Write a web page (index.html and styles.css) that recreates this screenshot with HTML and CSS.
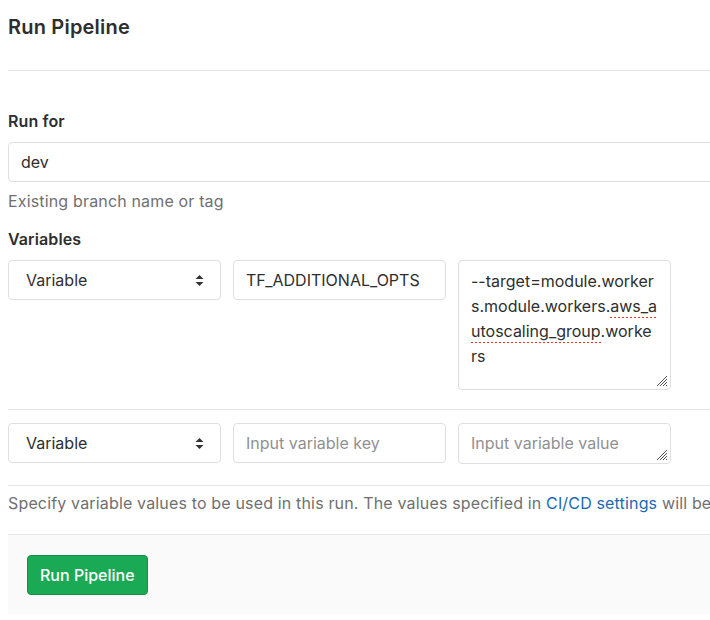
FILE: index.html
```html
<!DOCTYPE html>
<html lang="en">
<head>
<meta charset="utf-8">
<title>Run Pipeline</title>
<link rel="stylesheet" href="styles.css">
</head>
<body>
<div class="page">
  <div class="page-header">
    <h1 class="page-title">Run Pipeline</h1>
  </div>

  <form class="pipeline-form">
    <div class="form-group">
      <label class="label" for="ref">Run for</label>
      <input class="form-control" id="ref" type="text" value="dev">
      <div class="form-text">Existing branch name or tag</div>
    </div>

    <div class="form-group variables">
      <div class="label">Variables</div>
      <ul class="var-list">
        <li class="var-row">
          <div class="select">
            <span>Variable</span>
            <svg class="caret" width="9" height="13" viewBox="0 0 9 13"><path d="M4.5 1 L8.5 5 H0.5 Z M4.5 12 L8.5 8 H0.5 Z" fill="#333"/></svg>
          </div>
          <input class="form-control key" type="text" value="TF_ADDITIONAL_OPTS">
          <div class="textarea tall">--target=module.worker<br>s.module.workers.<span class="spell">aws_a</span><br><span class="spell">utoscaling_group</span>.worke<br>rs
            <svg class="grip" width="13" height="13" viewBox="0 0 13 13"><path d="M12 2 L2 12 M12 5 L5 12 M12 8 L8 12 M12 11 L11 12" stroke="#555" stroke-width="1"/></svg>
          </div>
        </li>
        <li class="var-row">
          <div class="select">
            <span>Variable</span>
            <svg class="caret" width="9" height="13" viewBox="0 0 9 13"><path d="M4.5 1 L8.5 5 H0.5 Z M4.5 12 L8.5 8 H0.5 Z" fill="#333"/></svg>
          </div>
          <input class="form-control key" type="text" placeholder="Input variable key">
          <div class="textarea short"><span class="placeholder">Input variable value</span>
            <svg class="grip" width="13" height="13" viewBox="0 0 13 13"><path d="M12 2 L2 12 M12 5 L5 12 M12 8 L8 12 M12 11 L11 12" stroke="#555" stroke-width="1"/></svg>
          </div>
        </li>
      </ul>
      <div class="form-text help">Specify variable values to be used in this run. The values specified in <a href="#">CI/CD settings</a> will be</div>
    </div>

    <div class="form-actions">
      <button type="button" class="btn-success">Run Pipeline</button>
    </div>
  </form>
</div>
</body>
</html>
```

FILE: styles.css
```css
html, body {
  margin: 0;
  padding: 0;
  overflow: hidden;
  background: #fff;
}

body {
  padding-left: 8px;
  font-family: Inter, "Noto Sans", sans-serif;
  font-size: 16px;
  color: #2e2e2e;
}

.page {
  width: 780px;
}

.page-header {
  padding: 15px 0 31px;
  border-bottom: 1px solid #e5e5e5;
}

.page-title {
  margin: 0;
  font-size: 20px;
  line-height: 24px;
  font-weight: 600;
  letter-spacing: 0.2px;
  color: #2e2e2e;
}

.pipeline-form {
  margin: 0;
}

.form-group {
  display: flex;
  flex-direction: column;
}

.form-group:first-child {
  padding-top: 40px;
}

.label {
  display: block;
  font-weight: 600;
  line-height: 20px;
  letter-spacing: 0.1px;
  margin-bottom: 11px;
}

.form-control {
  box-sizing: border-box;
  height: 40px;
  padding: 0 12px;
  border: 1px solid #dfdfdf;
  border-radius: 4px;
  font-family: inherit;
  font-size: 16px;
  color: #2e2e2e;
  background: #fff;
  outline: none;
}

.form-control::placeholder {
  color: #919191;
}

.form-text {
  margin-top: 9px;
  line-height: 20px;
  letter-spacing: 0.16px;
  color: #707070;
  white-space: nowrap;
}

.variables {
  margin-top: 18px;
}

.var-list {
  list-style: none;
  margin: 0;
  padding: 0;
}

.var-row {
  display: flex;
  align-items: flex-start;
  gap: 12px;
  padding-bottom: 19px;
  border-bottom: 1px solid #e5e5e5;
}

.var-row + .var-row {
  margin-top: 13px;
}

.var-row:last-child {
  padding-bottom: 21px;
}

.select {
  box-sizing: border-box;
  width: 213px;
  height: 40px;
  display: flex;
  align-items: center;
  justify-content: space-between;
  padding: 0 16px 0 17px;
  border: 1px solid #dfdfdf;
  border-radius: 4px;
  background: #fff;
  color: #2e2e2e;
}

.caret {
  display: block;
}

.key {
  width: 213px;
}

.textarea {
  position: relative;
  box-sizing: border-box;
  width: 213px;
  padding: 8px 12px;
  border: 1px solid #dfdfdf;
  border-radius: 4px;
  line-height: 25px;
  color: #2e2e2e;
}

.textarea.tall {
  height: 130px;
}

.textarea.short {
  height: 41px;
  line-height: 22px;
}

.placeholder {
  color: #919191;
}

.spell {
  padding-bottom: 2px;
  background-image: repeating-linear-gradient(to right, #e8322a 0 2px, transparent 2px 4px);
  background-size: 100% 1px;
  background-position: 0 100%;
  background-repeat: no-repeat;
}

.grip {
  position: absolute;
  right: 2px;
  bottom: 2px;
}

.help {
  margin-top: 7px;
}

.help a {
  color: #1b69b6;
  text-decoration: none;
}

.form-actions {
  margin-top: 21px;
  padding: 20px 19px 19px;
  border-top: 1px solid #e5e5e5;
  background: #fafafa;
}

.btn-success {
  height: 40px;
  padding: 0 12px;
  border: 1px solid #168f48;
  border-radius: 4px;
  background: #1aaa55;
  color: #fff;
  font-family: inherit;
  font-size: 16px;
  font-weight: 500;
}
```
